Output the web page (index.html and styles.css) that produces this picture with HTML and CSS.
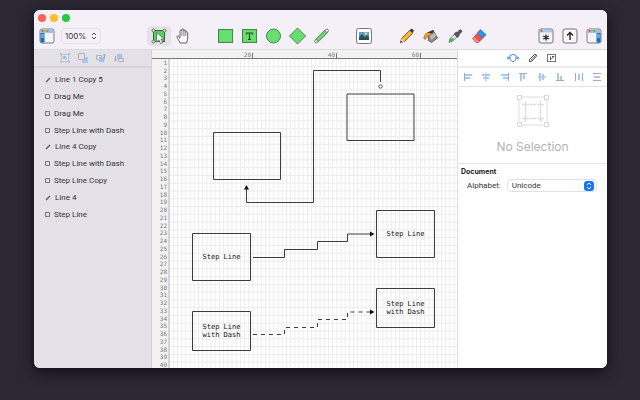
FILE: index.html
```html
<!DOCTYPE html>
<html lang="en">
<head>
<meta charset="utf-8">
<title>Diagram editor</title>
<link rel="stylesheet" href="styles.css">
</head>
<body>
<main class="window">
  <header class="chrome">
    <div class="lights">
      <button class="light close" aria-label="Close"></button>
      <button class="light minimise" aria-label="Minimise"></button>
      <button class="light expand" aria-label="Zoom window"></button>
    </div>
    <div class="toolbar">
      <button class="tool" aria-label="Toggle layers">
        <svg width="16" height="16"><rect x="1" y="1" width="14" height="14" rx="2" fill="#f4f4f6" stroke="#7d7b80"/><path d="M1.500 3a1.500 1.500 0 0 1 1.500-1.500h10a1.500 1.500 0 0 1 1.500 1.500v2h-13z" fill="#9fc1ea"/><path d="M1.500 5h4v9.500h-2.500a1.500 1.500 0 0 1-1.500-1.500z" fill="#1c6fb4"/><path d="M2 6h3v4h-3z" fill="#68a9e0"/><circle cx="3.500" cy="3" r="1" fill="#f0443a"/><circle cx="6" cy="3" r="1" fill="#f3a51c"/><circle cx="8.500" cy="3" r="1" fill="#3bbb3b"/></svg>
      </button>
      <div class="zoom">
        <select aria-label="Zoom level"><option>100%</option></select>
        <svg class="chevrons" width="6" height="8"><path d="M1 3l2-2 2 2M1 5l2 2 2-2" fill="none" stroke="#4a484d"/></svg>
      </div>
      <div class="group pointer">
        <button class="tool active" aria-label="Select">
          <svg width="16" height="16"><rect x="2.500" y="2.500" width="11" height="11" fill="#4fd65b" stroke="#37653b"/><g fill="#eee" stroke="#666"><circle cx="2.500" cy="2.500" r="1.500"/><circle cx="13.500" cy="2.500" r="1.500"/><circle cx="2.500" cy="13.500" r="1.500"/></g><path d="M5.500 4.500v9.500l2.300-2 1.700 3.500 2.200-1-1.700-3.500 3.500-.2z" fill="#f4f4f4" stroke="#58685a" stroke-width=".8"/></svg>
        </button>
        <button class="tool" aria-label="Pan">
          <svg width="14" height="16"><path d="M4 15C3.500 12.500 1.500 11 1 9c-.2-1.300 1-1.500 1.700-.6L4 10V3.200c0-1.500 1.800-1.500 1.800 0V2c0-1.500 2-1.500 2 0v1c0-1.500 2-1.300 2 0v1.500c0-1.300 1.900-1.200 1.900.2V10c0 2.500-1 3.500-1.200 5z" fill="#fafafa" stroke="#555" stroke-width=".9"/><path d="M5.900 3.500V8M7.900 3V8M9.800 4.500V8" stroke="#666" stroke-width=".8"/></svg>
        </button>
      </div>
      <div class="group">
        <button class="tool" aria-label="Rectangle"><svg width="16" height="16"><rect x=".5" y="1.500" width="14" height="13" fill="#67de70" stroke="#4a824e"/></svg></button>
        <button class="tool" aria-label="Text"><svg width="16" height="16"><rect x=".5" y="1.500" width="14" height="13" fill="#67de70" stroke="#4a824e"/><path d="M4.500 6.500V5h6v1.500M7.500 5v6.500M6 11.500h3" fill="none" stroke="#214d25" stroke-width="1.200"/></svg></button>
        <button class="tool" aria-label="Ellipse"><svg width="16" height="16"><circle cx="7.500" cy="8" r="7" fill="#67de70" stroke="#4a824e"/></svg></button>
        <button class="tool" aria-label="Diamond"><svg width="18" height="18"><path d="M8.500 1l8 8-8 8-8-8z" fill="#67de70" stroke="#4a824e"/></svg></button>
        <button class="tool" aria-label="Line"><svg width="16" height="16"><path d="M2.500 13L12.500 3" stroke="#4a824e" stroke-width="4"/><path d="M2.500 13L12.500 3" stroke="#67de70" stroke-width="2.500"/><circle cx="2.200" cy="13.300" r="1.600" fill="#fff" stroke="#777"/><circle cx="12.800" cy="2.700" r="1.600" fill="#fff" stroke="#777"/></svg></button>
      </div>
      <div class="group picture">
        <button class="tool" aria-label="Picture"><svg width="16" height="16"><rect x=".5" y=".5" width="15" height="15" rx="2" fill="#fff" stroke="#77757a"/><path d="M3 4h10v8H3z" fill="#5a9be6"/><path d="M3 12v-3l3-3 3 3 2-2 2 2v3z" fill="#265c43"/><path d="M3 10.500h10V12H3z" fill="#26466c"/><circle cx="10" cy="5.500" r="1.300" fill="#ffd93a"/></svg></button>
      </div>
      <div class="group">
        <button class="tool" aria-label="Pencil"><svg width="16" height="16"><path d="M1.500 14.500l1-4L11 2l3 3-8.500 8.500z" fill="#f5ab2b" stroke="#705025" stroke-width=".8"/><path d="M4 12l8-8" stroke="#ffd06b"/><path d="M10.500 2.500L12 1q1-.5 2 .5t.5 2L13.500 5z" fill="#39383d"/><path d="M1.500 14.500l1-4 3 3z" fill="#efd9b8"/><path d="M1.200 14.800l.7-2 1.400 1.300z" fill="#222"/></svg></button>
        <button class="tool" aria-label="Fill"><svg width="16" height="16"><path d="M5 5l5-3 4.500 8-6 4.500-3-2z" fill="#8d8b8f" stroke="#4d4b4f" stroke-width=".8"/><path d="M7 7l5-2 1 3-5 4z" fill="#bbb"/><path d="M10 4.500C7 3 2 5 1 9c-.6 2.500 1.700 3 2.200 1.200C4 7.500 7 8.500 10 4.500z" fill="#f49b21" stroke="#80551a" stroke-width=".6"/><path d="M4 4.500l7-2-2 3z" fill="#333"/></svg></button>
        <button class="tool" aria-label="Eyedropper"><svg width="16" height="16"><path d="M2 14.500l1-4L9 5l2.500 2.500-6 5.500z" fill="#dfe8e3" stroke="#5b625e" stroke-width=".8"/><path d="M2 14.500l1-4 3-.2 1.500 1-2 2z" fill="#43b857"/><path d="M7 6l2.200-2 1 .5L12.500 2q1.200-.8 2 .2t0 2L12 6.500l.3 1L10.500 9.500z" fill="#57565b" stroke="#333" stroke-width=".5"/></svg></button>
        <button class="tool" aria-label="Eraser"><svg width="16" height="16"><path d="M1.500 10.500L9 2.500l5.500 4.500-7 7.500H5z" fill="#ee5148" stroke="#8b5160" stroke-width=".8"/><path d="M6.500 5L9.500 1.500l5.500 5-3.300 3.500z" fill="#2b94f2" stroke="#376a9a" stroke-width=".6"/><path d="M1.500 10.500L3 9l5.500 4.500-1 1H5z" fill="#f58a80"/></svg></button>
      </div>
      <div class="group end">
        <button class="tool" aria-label="Symbols"><svg width="16" height="16"><rect x="1" y="1" width="14" height="14" rx="2" fill="#f4f4f4" stroke="#747277"/><path d="M1.500 3A1.500 1.500 0 0 1 3 1.500h10A1.500 1.500 0 0 1 14.500 3v1.500h-13z" fill="#a9c9ee"/><circle cx="3.500" cy="3" r="1" fill="#e8453e"/><path d="M8 6.500v6M5.200 8l5.600 3M10.800 8l-5.600 3" stroke="#222" stroke-width="1.300"/></svg></button>
        <button class="tool" aria-label="Export"><svg width="16" height="16"><rect x="1" y="1" width="14" height="14" rx="2" fill="#f8f8f8" stroke="#747277"/><path d="M8 12V4.500M5 7.500l3-3 3 3" fill="none" stroke="#222" stroke-width="1.400"/></svg></button>
        <button class="tool" aria-label="Toggle inspector"><svg width="16" height="16"><rect x="1" y="1" width="14" height="14" rx="2" fill="#f4f4f6" stroke="#7d7b80"/><path d="M1.500 3A1.500 1.500 0 0 1 3 1.500h10A1.500 1.500 0 0 1 14.500 3v2h-13z" fill="#9fc1ea"/><path d="M10.500 5h4v8a1.500 1.500 0 0 1-1.500 1.500h-2.500z" fill="#1c6fb4"/><path d="M11 6h3v4h-3z" fill="#68a9e0"/><circle cx="3.500" cy="3" r="1" fill="#f0443a"/><circle cx="6" cy="3" r="1" fill="#f3a51c"/><circle cx="8.500" cy="3" r="1" fill="#3bbb3b"/></svg></button>
      </div>
    </div>
  </header>

  <div class="body">
    <aside class="sidebar">
      <div class="arrange">
        <button aria-label="Group"><svg width="10" height="10"><path d="M1.500 1.500h7v7h-7z" fill="#e3eaf5" stroke="#b9bfcb"/><path d="M3 3h3v3H3z" fill="#9db9dc"/><path d="M5 5h2v2H5z" fill="#b6cdea"/><path d="M0 0h2v2H0zM8 0h2v2H8zM0 8h2v2H0zM8 8h2v2H8z" fill="#c1c0c6"/></svg></button>
        <button aria-label="Bring forward"><svg width="10" height="10"><path d="M4 4h6v6H4z" fill="#a9c8ec"/><path d="M.5.5h6v6h-6z" fill="#e5e2e8" stroke="#b1b0b6"/></svg></button>
        <button aria-label="Bring to front"><svg width="10" height="10"><path d="M.5 2.500h5v4h-5z" fill="#e5e2e8" stroke="#b1b0b6"/><path d="M3 4h5v5H3z" fill="#a1c2e9"/><path d="M8.500 6V1M7 2.500L8.500 1 10 2.500" fill="none" stroke="#a8a7ad"/></svg></button>
        <button aria-label="Send to back"><svg width="10" height="10"><path d="M3 1h5v5H3z" fill="#a1c2e9"/><path d="M4.500 5.500h5v3h-5z" fill="#e5e2e8" stroke="#b1b0b6"/><path d="M1.500 3v5M0 6.500L1.500 8 3 6.500" fill="none" stroke="#a8a7ad"/></svg></button>
      </div>
      <ul class="layers">
        <li class="line"><svg width="6" height="6"><path d="M1 5L5 1" stroke="#66646a" stroke-width="1.600"/></svg>Line 1 Copy 5</li>
        <li><svg width="6" height="6"><path d="M.5.5h4v4h-4z" fill="none" stroke="#77757b"/></svg>Drag Me</li>
        <li><svg width="6" height="6"><path d="M.5.5h4v4h-4z" fill="none" stroke="#77757b"/></svg>Drag Me</li>
        <li><svg width="6" height="6"><path d="M.5.5h4v4h-4z" fill="none" stroke="#77757b"/></svg>Step Line with Dash</li>
        <li class="line"><svg width="6" height="6"><path d="M1 5L5 1" stroke="#66646a" stroke-width="1.600"/></svg>Line 4 Copy</li>
        <li><svg width="6" height="6"><path d="M.5.5h4v4h-4z" fill="none" stroke="#77757b"/></svg>Step Line with Dash</li>
        <li><svg width="6" height="6"><path d="M.5.5h4v4h-4z" fill="none" stroke="#77757b"/></svg>Step Line Copy</li>
        <li class="line"><svg width="6" height="6"><path d="M1 5L5 1" stroke="#66646a" stroke-width="1.600"/></svg>Line 4</li>
        <li><svg width="6" height="6"><path d="M.5.5h4v4h-4z" fill="none" stroke="#77757b"/></svg>Step Line</li>
      </ul>
    </aside>

    <section class="editor" aria-label="Canvas">
      <div class="ruler-top"><span>20</span><span>40</span><span>60</span></div>
      <div class="ruler-left"><span>1</span><span>2</span><span>3</span><span>4</span><span>5</span><span>6</span><span>7</span><span>8</span><span>9</span><span>10</span><span>11</span><span>12</span><span>13</span><span>14</span><span>15</span><span>16</span><span>17</span><span>18</span><span>19</span><span>20</span><span>21</span><span>22</span><span>23</span><span>24</span><span>25</span><span>26</span><span>27</span><span>28</span><span>29</span><span>30</span><span>31</span><span>32</span><span>33</span><span>34</span><span>35</span><span>36</span><span>37</span><span>38</span><span>39</span><span>40</span></div>
      <svg class="canvas" width="100%" height="100%">
        <defs>
          <pattern id="cells" width="4.190" height="7.780" patternUnits="userSpaceOnUse" x="168.700" y="58.200">
            <path d="M.5 0v7.780M0 .5h4.190" fill="none" stroke="#ebebeb"/>
          </pattern>
        </defs>
        <g transform="translate(-170 -59)">
          <rect x="170" y="59" width="100%" height="100%" fill="url(#cells)"/>
          <g class="ink">
            <path d="M213.500 132.500h67v47h-67z"/>
            <path d="M347 94h67v46.500h-67z"/>
            <path d="M192.500 233.500h58v47h-58z"/>
            <path d="M376.500 210.500h58v47h-58z"/>
            <path d="M192.500 311.500h58v39h-58z"/>
            <path d="M376.500 288.500h58v39h-58z"/>
            <path d="M380.500 82V70.500h-67v132h-67V188"/>
            <path d="M253 257.500h31.500v-8h33v-8h30v-7.500H371"/>
            <path class="dash" d="M253 334.500h31.500v-7h33v-8h30v-7.500H371"/>
            <circle cx="380.500" cy="86.500" r="1.700" stroke-width=".8"/>
          </g>
          <path d="M246.500 185l2.500 4.500h-5zM374.500 234l-4.500 2.500v-5zM374.500 312l-4.500 2.500v-5z" fill="#111"/>
          <g class="caption">
            <text x="221.500" y="259">Step Line</text>
            <text x="405.500" y="236">Step Line</text>
            <text x="221.500" y="329">Step Line</text>
            <text x="221.500" y="337">with Dash</text>
            <text x="405.500" y="306">Step Line</text>
            <text x="405.500" y="314">with Dash</text>
          </g>
        </g>
      </svg>
    </section>

    <aside class="inspector">
      <div class="tabs">
        <button aria-label="Shape"><svg width="12" height="10"><path d="M1 3.500v3M0 5h3M9 5h3M11 3.500v3M3 3q0-1 1-1h1l1-1 1 1h1q1 0 1 1v3.500L6 9 3 6.500z" fill="none" stroke="#4f7fee"/></svg></button>
        <button aria-label="Style"><svg width="10" height="10"><path d="M1.500 8.500v-2L6.500 1.500q2-.8 2 1.500L4 8z" fill="none" stroke="#444"/><path d="M3 7l4.500-4.500" stroke="#777"/></svg></button>
        <button aria-label="Canvas"><svg width="10" height="10"><rect x=".5" y="1.500" width="8" height="7" fill="none" stroke="#777"/><path d="M3.500 7V3.500M5 3.500h2L4 6.500" fill="none" stroke="#555"/></svg></button>
      </div>
      <div class="align">
        <button aria-label="Align left"><svg width="10" height="10"><path d="M1.500 1v8" stroke="#aaa"/><path d="M2 2h7v2H2zM2 5h5v2H2z" fill="#a9caf0"/></svg></button>
        <button aria-label="Align centre"><svg width="10" height="10"><path d="M5 1v8" stroke="#aaa"/><path d="M1 2h8v2H1zM2 5h6v2H2z" fill="#a9caf0"/></svg></button>
        <button aria-label="Align right"><svg width="10" height="10"><path d="M8.500 1v8" stroke="#aaa"/><path d="M1 2h7v2H1zM3 5h5v2H3z" fill="#a9caf0"/></svg></button>
        <button aria-label="Align top"><svg width="10" height="10"><path d="M1 1.500h8" stroke="#aaa"/><path d="M2 2h2v7H2zM5 2h2v5H5z" fill="#a9caf0"/></svg></button>
        <button aria-label="Align middle"><svg width="10" height="10"><path d="M1 5h8" stroke="#aaa"/><path d="M2 1h2v8H2zM5 2h2v6H5z" fill="#a9caf0"/></svg></button>
        <button aria-label="Align bottom"><svg width="10" height="10"><path d="M1 8.500h8" stroke="#aaa"/><path d="M2 1h2v7H2zM5 4h2v4H5z" fill="#a9caf0"/></svg></button>
        <button aria-label="Distribute horizontally"><svg width="10" height="10"><path d="M1.500 1v8M8.500 1v8" stroke="#aaa"/><path d="M4 2h2v6H4z" fill="#a9caf0"/></svg></button>
        <button aria-label="Distribute vertically"><svg width="10" height="10"><path d="M1 1.500h8M1 8.500h8" stroke="#aaa"/><path d="M2 4h6v2H2z" fill="#a9caf0"/></svg></button>
      </div>
      <div class="empty">
        <svg width="34" height="34"><g fill="none" stroke="#dedede"><path d="M3 3h28v28H3z"/><path d="M14 10.500h6M14 24.500h6M9.500 14v6M24.500 14v6" stroke-width="1.500"/><path d="M6 10.500h7M9.500 7v7M21 10.500h7M24.500 7v7M6 24.500h7M9.500 21v7M21 24.500h7M24.500 21v7" stroke-width="1.500"/></g><path d="M1.500 1.500h4v4h-4zM28.500 1.500h4v4h-4zM1.500 28.500h4v4h-4zM28.500 28.500h4v4h-4z" fill="#fff" stroke="#d6d6d6"/></svg>
        <p>No Selection</p>
      </div>
      <div class="document">
        <h2>Document</h2>
        <div class="field">
          <label for="alphabet">Alphabet:</label>
          <div class="popup">
            <select id="alphabet"><option>Unicode</option></select>
            <svg class="stepper" width="10" height="10"><rect width="10" height="10" rx="3" fill="#1677f2"/><path d="M3 4l2-2 2 2M3 6l2 2 2-2" fill="none" stroke="#fff"/></svg>
          </div>
        </div>
      </div>
    </aside>
  </div>
</main>
</body>
</html>
```
FILE: styles.css
```css
* { box-sizing: border-box; }

body {
  margin: 0;
  height: 100vh;
  padding: 10px 33px 32px 34px;
  display: flex;
  background: #2b2834;
  font: 8px/10px Roboto, "Liberation Sans", sans-serif;
  color: #343337;
}

button {
  border: 0;
  padding: 0;
  background: none;
  display: flex;
  align-items: center;
  justify-content: center;
}

select {
  appearance: none;
  width: 100%;
  height: 100%;
  margin: 0;
  padding: 0 4px;
  border: 1px solid #e4dfe7;
  border-radius: 4px;
  background: transparent;
  font: inherit;
  color: inherit;
}

.window {
  flex: 1;
  display: flex;
  flex-direction: column;
  border-radius: 6px;
  overflow: hidden;
  background: #fff;
  box-shadow: 0 4px 14px #100d18;
}

.chrome {
  background: #f5eff7;
  border-bottom: 1px solid #dedae0;
}

.lights {
  display: flex;
  gap: 4px;
  height: 16px;
  padding: 0 4px;
  align-items: center;
}

.light { width: 8px; height: 8px; border-radius: 50%; }
.close { background: #fe5f57; }
.minimise { background: #febc2e; }
.expand { background: #28c840; }

.toolbar {
  display: flex;
  height: 23px;
  padding: 0 1px;
}

.tool {
  width: 24px;
  height: 20px;
  border-radius: 4px;
}

.active { background: #e7e1e9; }

.zoom {
  position: relative;
  width: 40px;
  height: 16px;
  margin: 2px 2px 0;
  font-family: Inter, "Liberation Sans", sans-serif;
}

.zoom select { padding: 0 3px; }

.chevrons { position: absolute; right: 4px; top: 4px; }

.group { display: flex; margin-left: 19px; }
.pointer { margin-left: 44px; }
.picture { margin-left: 18px; }
.end { margin-left: auto; }

.body {
  flex: 1;
  min-height: 0;
  display: grid;
  grid-template-columns: 118px minmax(0, 1fr) 150px;
}

.sidebar {
  background: #e5e1e8;
  border-right: 1px solid #d6d1da;
}

.arrange {
  display: flex;
  justify-content: center;
  gap: 8px;
  height: 18px;
  padding-right: 2px;
  border-bottom: 2px solid #d7d3da;
}

.layers {
  display: grid;
  grid-auto-rows: 1fr;
  height: 151px;
  margin: 4px 0 0;
  padding: 0 0 0 11px;
  list-style: none;
}

.layers li { display: flex; align-items: center; gap: 3px; }
.layers .line { gap: 4px; }

.editor {
  min-height: 0;
  display: grid;
  grid-template: 9px minmax(0, 1fr) / 18px minmax(0, 1fr);
  background: #fff;
  overflow: hidden;
  font: 6px/7px "DejaVu Sans Mono", monospace;
  color: #777;
}

.ruler-top {
  grid-column: 1 / -1;
  display: flex;
  padding-left: 17px;
  background: #f2f2f2;
  border-bottom: 1px solid #777;
}

.ruler-top span {
  width: 84px;
  padding: 1px 2px 0 0;
  text-align: right;
  background: linear-gradient(#777, #777) bottom right / 1px 5px no-repeat;
}

.ruler-left {
  display: grid;
  grid-auto-rows: 1fr;
  min-height: 0;
  margin-bottom: -1px;
  padding-right: 1px;
  align-items: center;
  text-align: right;
  line-height: 6px;
  background: #f2f2f2;
  border-right: 2px solid #d4d4d4;
}

.canvas { display: block; }
.ink { fill: none; stroke: #3c3c3c; stroke-width: 1; }
.dash { stroke-dasharray: 4 4; }

.caption {
  font-size: 7px;
  text-anchor: middle;
  fill: #111;
}

.inspector {
  background: #fff;
  border-left: 1px solid #dcdcdc;
}

.tabs {
  display: flex;
  justify-content: center;
  gap: 9px;
  height: 18px;
  padding-right: 2px;
  border-bottom: 2px solid #ececec;
}

.align {
  display: flex;
  justify-content: space-between;
  height: 19px;
  padding: 0 5px;
  border-bottom: 1px solid #e3e3e3;
}

.empty {
  display: flex;
  flex-direction: column;
  align-items: center;
  gap: 11px;
  padding: 7px 0 8px;
  border-bottom: 1px solid #e3e3e3;
  font: 12px/16px Inter, "Liberation Sans", sans-serif;
  color: #b4b4b4;
}

.empty p { margin: 0; }

.document { padding: 3px; }

.document h2 {
  margin: 0;
  font: bold 7px/10px Inter, "Liberation Sans", sans-serif;
  color: #222;
}

.field {
  display: flex;
  align-items: center;
  gap: 6px;
  margin-top: 2px;
  padding: 0 7px 0 6px;
}

.popup { position: relative; flex: 1; height: 13px; }
.stepper { position: absolute; right: 3px; top: 2px; }
```
